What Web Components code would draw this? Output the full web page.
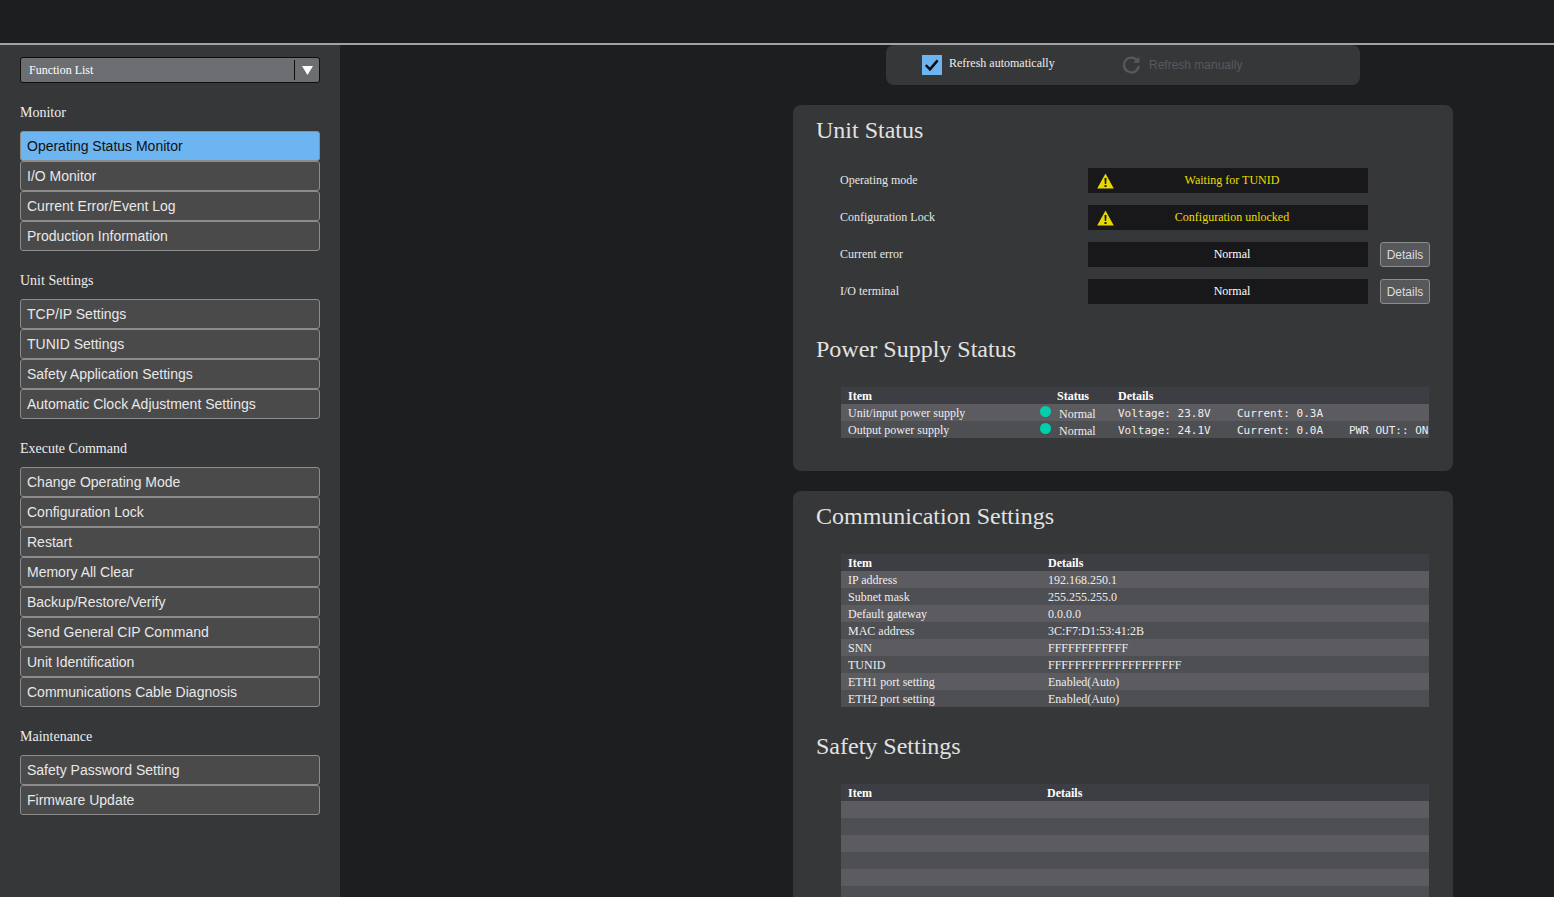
<!DOCTYPE html>
<html lang="en">
<head>
<meta charset="utf-8">
<title>Operating Status Monitor</title>
<style>
    html, body { margin: 0; height: 100%; overflow: hidden; background: #1d1e20; }
</style>
</head>
<body>
<app-shell>
    <side-nav slot="side">
        <nav-group label="Monitor">
            <nav-item selected>Operating Status Monitor</nav-item>
            <nav-item>I/O Monitor</nav-item>
            <nav-item>Current Error/Event Log</nav-item>
            <nav-item>Production Information</nav-item>
        </nav-group>
        <nav-group label="Unit Settings">
            <nav-item>TCP/IP Settings</nav-item>
            <nav-item>TUNID Settings</nav-item>
            <nav-item>Safety Application Settings</nav-item>
            <nav-item>Automatic Clock Adjustment Settings</nav-item>
        </nav-group>
        <nav-group label="Execute Command">
            <nav-item>Change Operating Mode</nav-item>
            <nav-item>Configuration Lock</nav-item>
            <nav-item>Restart</nav-item>
            <nav-item>Memory All Clear</nav-item>
            <nav-item>Backup/Restore/Verify</nav-item>
            <nav-item>Send General CIP Command</nav-item>
            <nav-item>Unit Identification</nav-item>
            <nav-item>Communications Cable Diagnosis</nav-item>
        </nav-group>
        <nav-group label="Maintenance">
            <nav-item>Safety Password Setting</nav-item>
            <nav-item>Firmware Update</nav-item>
        </nav-group>
    </side-nav>

    <refresh-bar></refresh-bar>

    <panel-card>
        <panel-section heading="Unit Status">
            <status-row label="Operating mode" warn>Waiting for TUNID</status-row>
            <status-row label="Configuration Lock" warn>Configuration unlocked</status-row>
            <status-row label="Current error" details>Normal</status-row>
            <status-row label="I/O terminal" details>Normal</status-row>
        </panel-section>
        <panel-section heading="Power Supply Status" gap="31">
            <data-table style="--cols: 192px 17px 61px 119px 112px 1fr">
                <table-row head><span>Item</span><span></span><span>Status</span><span>Details</span></table-row>
                <table-row><span>Unit/input power supply</span><status-dot></status-dot><span class="state">Normal</span><span class="mono">Voltage: 23.8V</span><span class="mono">Current: 0.3A</span></table-row>
                <table-row><span>Output power supply</span><status-dot></status-dot><span class="state">Normal</span><span class="mono">Voltage: 24.1V</span><span class="mono">Current: 0.0A</span><span class="mono">PWR OUT:: ON</span></table-row>
            </data-table>
        </panel-section>
    </panel-card>

    <panel-card>
        <panel-section heading="Communication Settings">
            <data-table style="--cols: 200px 1fr">
                <table-row head><span>Item</span><span>Details</span></table-row>
                <table-row><span>IP address</span><span>192.168.250.1</span></table-row>
                <table-row><span>Subnet mask</span><span>255.255.255.0</span></table-row>
                <table-row><span>Default gateway</span><span>0.0.0.0</span></table-row>
                <table-row><span>MAC address</span><span>3C:F7:D1:53:41:2B</span></table-row>
                <table-row><span>SNN</span><span>FFFFFFFFFFFF</span></table-row>
                <table-row><span>TUNID</span><span>FFFFFFFFFFFFFFFFFFFF</span></table-row>
                <table-row><span>ETH1 port setting</span><span>Enabled(Auto)</span></table-row>
                <table-row><span>ETH2 port setting</span><span>Enabled(Auto)</span></table-row>
            </data-table>
        </panel-section>
        <panel-section heading="Safety Settings" gap="25">
            <data-table style="--cols: 199px 1fr">
                <table-row head><span>Item</span><span>Details</span></table-row>
                <table-row></table-row>
                <table-row></table-row>
                <table-row></table-row>
                <table-row></table-row>
                <table-row></table-row>
                <table-row></table-row>
                <table-row></table-row>
                <table-row></table-row>
            </data-table>
        </panel-section>
    </panel-card>
</app-shell>

<script>
class AppShell extends HTMLElement {
    constructor() {
        super();
        this.attachShadow({ mode: 'open' });
        this.shadowRoot.innerHTML = `
            <style>
                :host {
                    display: flex;
                    flex-direction: column;
                    height: 100vh;
                    overflow: hidden;
                    color: #eee;
                    font-family: "Liberation Serif", serif;
                }
                header {
                    flex: none;
                    height: 43px;
                    border-bottom: 2px solid #a3a3a3;
                    background: #1d1e20;
                }
                #body {
                    flex: 1;
                    display: flex;
                    min-height: 0;
                }
                main {
                    flex: 1;
                    min-width: 0;
                    display: flex;
                    flex-direction: column;
                    align-items: flex-start;
                    gap: 20px;
                    padding-left: 453px;
                    overflow: hidden;
                }
            </style>
            <header></header>
            <div id="body">
                <slot name="side"></slot>
                <main><slot></slot></main>
            </div>
        `;
    }
}

class SideNav extends HTMLElement {
    constructor() {
        super();
        this.attachShadow({ mode: 'open' });
        this.shadowRoot.innerHTML = `
            <style>
                :host {
                    display: block;
                    flex: none;
                    box-sizing: border-box;
                    width: 340px;
                    padding: 12px 20px 0;
                    background: #363739;
                }
                #select {
                    box-sizing: border-box;
                    height: 26px;
                    display: flex;
                    align-items: center;
                    border: 1px solid #0d0d0d;
                    border-radius: 3px;
                    background: #6d6e72;
                    color: #fff;
                    font-size: 12px;
                    padding-left: 8px;
                }
                #select span { flex: 1; }
                #arrow {
                    flex: none;
                    width: 24px;
                    height: 20px;
                    display: flex;
                    align-items: center;
                    justify-content: center;
                    border-left: 1px solid #0d0d0d;
                }
            </style>
            <div id="select">
                <span>Function List</span>
                <div id="arrow">
                    <svg width="11" height="9" viewBox="0 0 11 9"><path d="M0 0h11L5.5 9z" fill="#fff"/></svg>
                </div>
            </div>
            <slot></slot>
        `;
    }
}

class NavGroup extends HTMLElement {
    constructor() {
        super();
        this.attachShadow({ mode: 'open' });
        this.shadowRoot.innerHTML = `
            <style>
                :host { display: block; }
                #label {
                    margin: 22px 0 10px;
                    font-size: 14px;
                    line-height: 16px;
                    color: #eee;
                }
            </style>
            <div id="label"></div>
            <slot></slot>
        `;
    }

    connectedCallback() {
        this.shadowRoot.querySelector('#label').textContent = this.getAttribute('label');
    }
}

class NavItem extends HTMLElement {
    constructor() {
        super();
        this.attachShadow({ mode: 'open' });
        this.shadowRoot.innerHTML = `
            <style>
                :host {
                    display: block;
                    box-sizing: border-box;
                    height: 30px;
                    padding-left: 6px;
                    border: 1px solid #8c8c8c;
                    border-radius: 3px;
                    background: #4a4a4b;
                    color: #e8e8e8;
                    font: 14px/28px "Liberation Sans", sans-serif;
                }
                :host([selected]) {
                    background: #6db5f1;
                    color: #111;
                }
            </style>
            <slot></slot>
        `;
    }
}

class RefreshBar extends HTMLElement {
    constructor() {
        super();
        this.attachShadow({ mode: 'open' });
        this.shadowRoot.innerHTML = `
            <style>
                :host {
                    display: flex;
                    flex: none;
                    box-sizing: border-box;
                    width: 474px;
                    height: 40px;
                    margin-left: 93px;
                    padding-left: 36px;
                    align-items: center;
                    border-radius: 8px;
                    background: #363739;
                    font-size: 12px;
                    color: #eee;
                }
                #auto {
                    display: flex;
                    align-items: center;
                    gap: 7px;
                    width: 200px;
                }
                #auto span { margin-top: -4px; }
                #box {
                    width: 20px;
                    height: 20px;
                    background: #6db5f1;
                    display: flex;
                    align-items: center;
                    justify-content: center;
                }
                #manual {
                    display: flex;
                    align-items: center;
                    gap: 8px;
                    color: #58595c;
                    font-family: "Liberation Sans", sans-serif;
                }
            </style>
            <div id="auto">
                <div id="box">
                    <svg width="14" height="12" viewBox="0 0 14 12"><path d="M.7 6l4.3 4.4 7.6-9" fill="none" stroke="#0d0d0d" stroke-width="2.5"/></svg>
                </div>
                <span>Refresh automatically</span>
            </div>
            <div id="manual">
                <svg width="19" height="18" viewBox="0 0 19 18"><path d="M15.4 4.6A7.4 7.4 0 1 0 16.8 10" fill="none" stroke="#58595c" stroke-width="2.2"/><path d="M17.4 .6v6.2h-6.2z" fill="#58595c"/></svg>
                <span>Refresh manually</span>
            </div>
        `;
    }
}

class PanelCard extends HTMLElement {
    constructor() {
        super();
        this.attachShadow({ mode: 'open' });
        this.shadowRoot.innerHTML = `
            <style>
                :host {
                    display: block;
                    flex: none;
                    box-sizing: border-box;
                    width: 660px;
                    padding: 0 24px 33px 0;
                    border-radius: 8px;
                    background: #363739;
                }
            </style>
            <slot></slot>
        `;
    }
}

class PanelSection extends HTMLElement {
    constructor() {
        super();
        this.attachShadow({ mode: 'open' });
        this.shadowRoot.innerHTML = `
            <style>
                :host { display: block; }
                h2 {
                    margin: 11px 0 24px 23px;
                    font-size: 24px;
                    font-weight: normal;
                    line-height: 28px;
                    color: #e2e2e2;
                }
                #content { padding-left: 48px; }
            </style>
            <h2></h2>
            <div id="content"><slot></slot></div>
        `;
    }

    connectedCallback() {
        const h2 = this.shadowRoot.querySelector('h2');
        h2.textContent = this.getAttribute('heading');
        if (this.hasAttribute('gap')) {
            h2.style.marginTop = this.getAttribute('gap') + 'px';
        }
    }
}

class StatusRow extends HTMLElement {
    constructor() {
        super();
        this.attachShadow({ mode: 'open' });
        this.shadowRoot.innerHTML = `
            <style>
                :host {
                    display: grid;
                    grid-template-columns: 248px 280px 50px;
                    align-items: center;
                    height: 25px;
                    margin: 0 0 12px -1px;
                    font-size: 12px;
                }
                :host(:last-child) { margin-bottom: 0; }
                #label { color: #e6e6e6; }
                #value {
                    position: relative;
                    box-sizing: border-box;
                    height: 25px;
                    padding: 0 0 1px 8px;
                    display: flex;
                    align-items: center;
                    justify-content: center;
                    background: #18181b;
                    color: #fff;
                }
                :host([warn]) #value { color: #eadf00; }
                svg {
                    position: absolute;
                    left: 9px;
                    top: 5px;
                    display: none;
                }
                :host([warn]) svg { display: block; }
                button {
                    display: none;
                    box-sizing: border-box;
                    width: 50px;
                    height: 25px;
                    margin-left: 12px;
                    padding: 0;
                    border: 1px solid #8c8c8c;
                    border-radius: 3px;
                    background: #57585b;
                    color: #ddd;
                    font: 12px "Liberation Sans", sans-serif;
                }
                :host([details]) button { display: block; }
            </style>
            <div id="label"></div>
            <div id="value">
                <svg width="17" height="16" viewBox="0 0 17 16"><path d="M8.5 0.5L16.8 15.6H0.2z" fill="#e6d800"/><path d="M7.5 5h2l-.3 6H7.8zM7.5 12h2v2h-2z" fill="#18181b"/></svg>
                <slot></slot>
            </div>
            <button>Details</button>
        `;
    }

    connectedCallback() {
        this.shadowRoot.querySelector('#label').textContent = this.getAttribute('label');
    }
}

class DataTable extends HTMLElement {
    constructor() {
        super();
        this.attachShadow({ mode: 'open' });
        this.shadowRoot.innerHTML = `
            <style>
                :host {
                    display: block;
                    width: 588px;
                    overflow: hidden;
                    font-size: 12px;
                    line-height: 19px;
                    color: #eee;
                }
            </style>
            <slot></slot>
        `;
    }
}

class TableRow extends HTMLElement {
    constructor() {
        super();
        this.attachShadow({ mode: 'open' });
        this.shadowRoot.innerHTML = `
            <style>
                :host {
                    display: grid;
                    grid-template-columns: var(--cols);
                    height: 17px;
                    padding-left: 7px;
                    white-space: nowrap;
                    background: #4e4f53;
                }
                :host(:nth-child(even)) { background: #5b5b60; }
                :host([head]) {
                    background: #3d3e43;
                    color: #fff;
                    font-weight: bold;
                    line-height: 18px;
                }
                ::slotted(.mono) {
                    font-family: "DejaVu Sans Mono", monospace;
                    font-size: 11px;
                }
                ::slotted(.state) {
                    margin: 1px 0 0 2px;
                }
            </style>
            <slot></slot>
        `;
    }
}

class StatusDot extends HTMLElement {
    constructor() {
        super();
        this.attachShadow({ mode: 'open' });
        this.shadowRoot.innerHTML = `
            <style>
                :host {
                    display: block;
                    width: 11px;
                    height: 11px;
                    margin-top: 2px;
                    border-radius: 50%;
                    background: #00cfae;
                }
            </style>
        `;
    }
}

customElements.define('app-shell', AppShell);
customElements.define('side-nav', SideNav);
customElements.define('nav-group', NavGroup);
customElements.define('nav-item', NavItem);
customElements.define('refresh-bar', RefreshBar);
customElements.define('panel-card', PanelCard);
customElements.define('panel-section', PanelSection);
customElements.define('status-row', StatusRow);
customElements.define('data-table', DataTable);
customElements.define('table-row', TableRow);
customElements.define('status-dot', StatusDot);
</script>
</body>
</html>
